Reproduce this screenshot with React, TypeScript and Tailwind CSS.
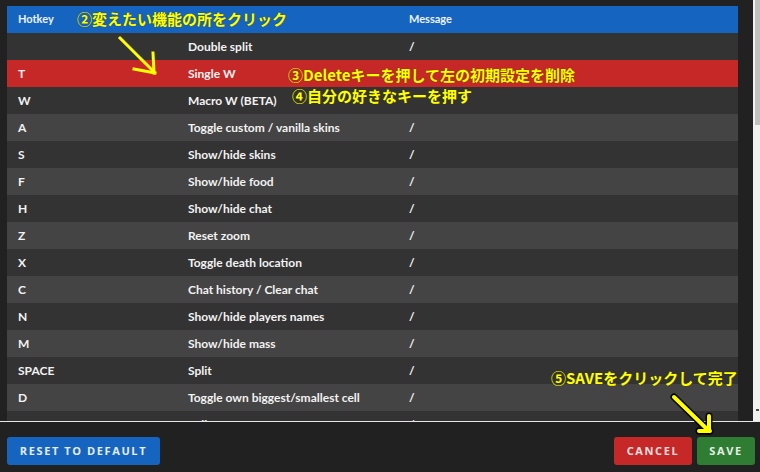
import React from "react";

const rows: { key: string; action: string; msg: string }[] = [
  { key: "", action: "Double split", msg: "/" },
  { key: "T", action: "Single W", msg: "" },
  { key: "W", action: "Macro W (BETA)", msg: "" },
  { key: "A", action: "Toggle custom / vanilla skins", msg: "/" },
  { key: "S", action: "Show/hide skins", msg: "/" },
  { key: "F", action: "Show/hide food", msg: "/" },
  { key: "H", action: "Show/hide chat", msg: "/" },
  { key: "Z", action: "Reset zoom", msg: "/" },
  { key: "X", action: "Toggle death location", msg: "/" },
  { key: "C", action: "Chat history / Clear chat", msg: "/" },
  { key: "N", action: "Show/hide players names", msg: "/" },
  { key: "M", action: "Show/hide mass", msg: "/" },
  { key: "SPACE", action: "Split", msg: "/" },
  { key: "D", action: "Toggle own biggest/smallest cell", msg: "/" },
  { key: "E", action: "Split x16", msg: "/" },
];

const note =
  "absolute whitespace-nowrap text-[15px] leading-[15px] font-bold text-[#ffff00] [font-family:'Noto_Sans_CJK_JP',sans-serif] [text-shadow:0_0_1px_#3a3000]";

export default function App() {
  return (
    <div className="relative w-[760px] h-[472px] overflow-hidden bg-[#212121] flex flex-col [font-family:Lato,'Noto_Sans',sans-serif]">
      <div className="flex h-[421px] overflow-hidden">
        <div className="flex-1 pl-[7px] pt-[6px] pr-[15px]">
          <div className="w-[731px]">
            <div className="grid grid-cols-[170px_221px_1fr] h-[27px] items-center bg-[#1565c0] text-[11px] font-bold text-[#eef2f8]">
              <div className="px-[11px]">Hotkey</div>
              <div className="px-[11px]"></div>
              <div className="px-[11px]">Message</div>
            </div>
            {rows.map((r, i) => (
              <div
                key={i}
                className={
                  "grid grid-cols-[170px_221px_1fr] h-[27px] items-center text-[12px] font-bold text-[#f2f2f2] " +
                  (i === 1 ? "bg-[#c62828]" : i % 2 === 0 ? "bg-[#333333]" : "bg-[#444444]")
                }
              >
                <div className="px-[11px]">{r.key}</div>
                <div className="px-[11px]">{r.action}</div>
                <div className="px-[11px]">{r.msg}</div>
              </div>
            ))}
          </div>
        </div>
        <div className="relative w-[7px] bg-[#f1f1f1] border-l-2 border-[#f1f1f1]">
          <div className="h-[125px] bg-[#c1c1c1]"></div>
          <div className="absolute left-[1px] top-[409px] w-[3px] h-[2px] bg-[#505050]"></div>
        </div>
      </div>
      <div className="flex-1 border-t border-[#e6e6e6] flex items-start justify-between pt-[15px] pl-[7px] pr-[5px] [font-family:'Open_Sans',sans-serif]">
        <button className="h-[28px] w-[153px] rounded-[3px] bg-[#1565c0] text-[#e8edf5] text-[11px] font-bold tracking-[1.6px]">
          RESET TO DEFAULT
        </button>
        <div className="flex gap-[5px]">
          <button className="h-[28px] w-[78px] rounded-[3px] bg-[#c62828] text-[#f0e0e0] text-[11px] font-bold tracking-[1.6px]">
            CANCEL
          </button>
          <button className="h-[28px] w-[58px] rounded-[3px] bg-[#2e7d32] text-[#e6efe6] text-[11px] font-bold tracking-[1.6px]">
            SAVE
          </button>
        </div>
      </div>

      <div className={note + " left-[77px] top-[11px]"}>②変えたい機能の所をクリック</div>
      <div className={note + " left-[288px] top-[67px]"}>③Deleteキーを押して左の初期設定を削除</div>
      <div className={note + " left-[292px] top-[88px]"}>④自分の好きなキーを押す</div>
      <div className={note + " left-[551px] top-[370px]"}>⑤SAVEをクリックして完了</div>

      <svg className="absolute left-0 top-0 pointer-events-none" width="760" height="472" viewBox="0 0 760 472">
        <g stroke="#ffff00" strokeWidth="3" fill="none" strokeLinecap="square">
          <line x1="120" y1="38" x2="154" y2="72" />
          <line x1="153" y1="53" x2="154" y2="73" />
          <line x1="134" y1="69" x2="155" y2="73" />
        </g>
        <g stroke="#000" strokeWidth="7" fill="none" strokeLinecap="round">
          <line x1="674" y1="397" x2="708" y2="430" />
          <line x1="709" y1="416" x2="709" y2="431" />
          <line x1="699" y1="431" x2="710" y2="431" />
        </g>
        <g stroke="#ffff00" strokeWidth="4" fill="none" strokeLinecap="round">
          <line x1="674" y1="397" x2="708" y2="430" />
          <line x1="709" y1="416" x2="709" y2="431" />
          <line x1="699" y1="431" x2="710" y2="431" />
        </g>
      </svg>
    </div>
  );
}
